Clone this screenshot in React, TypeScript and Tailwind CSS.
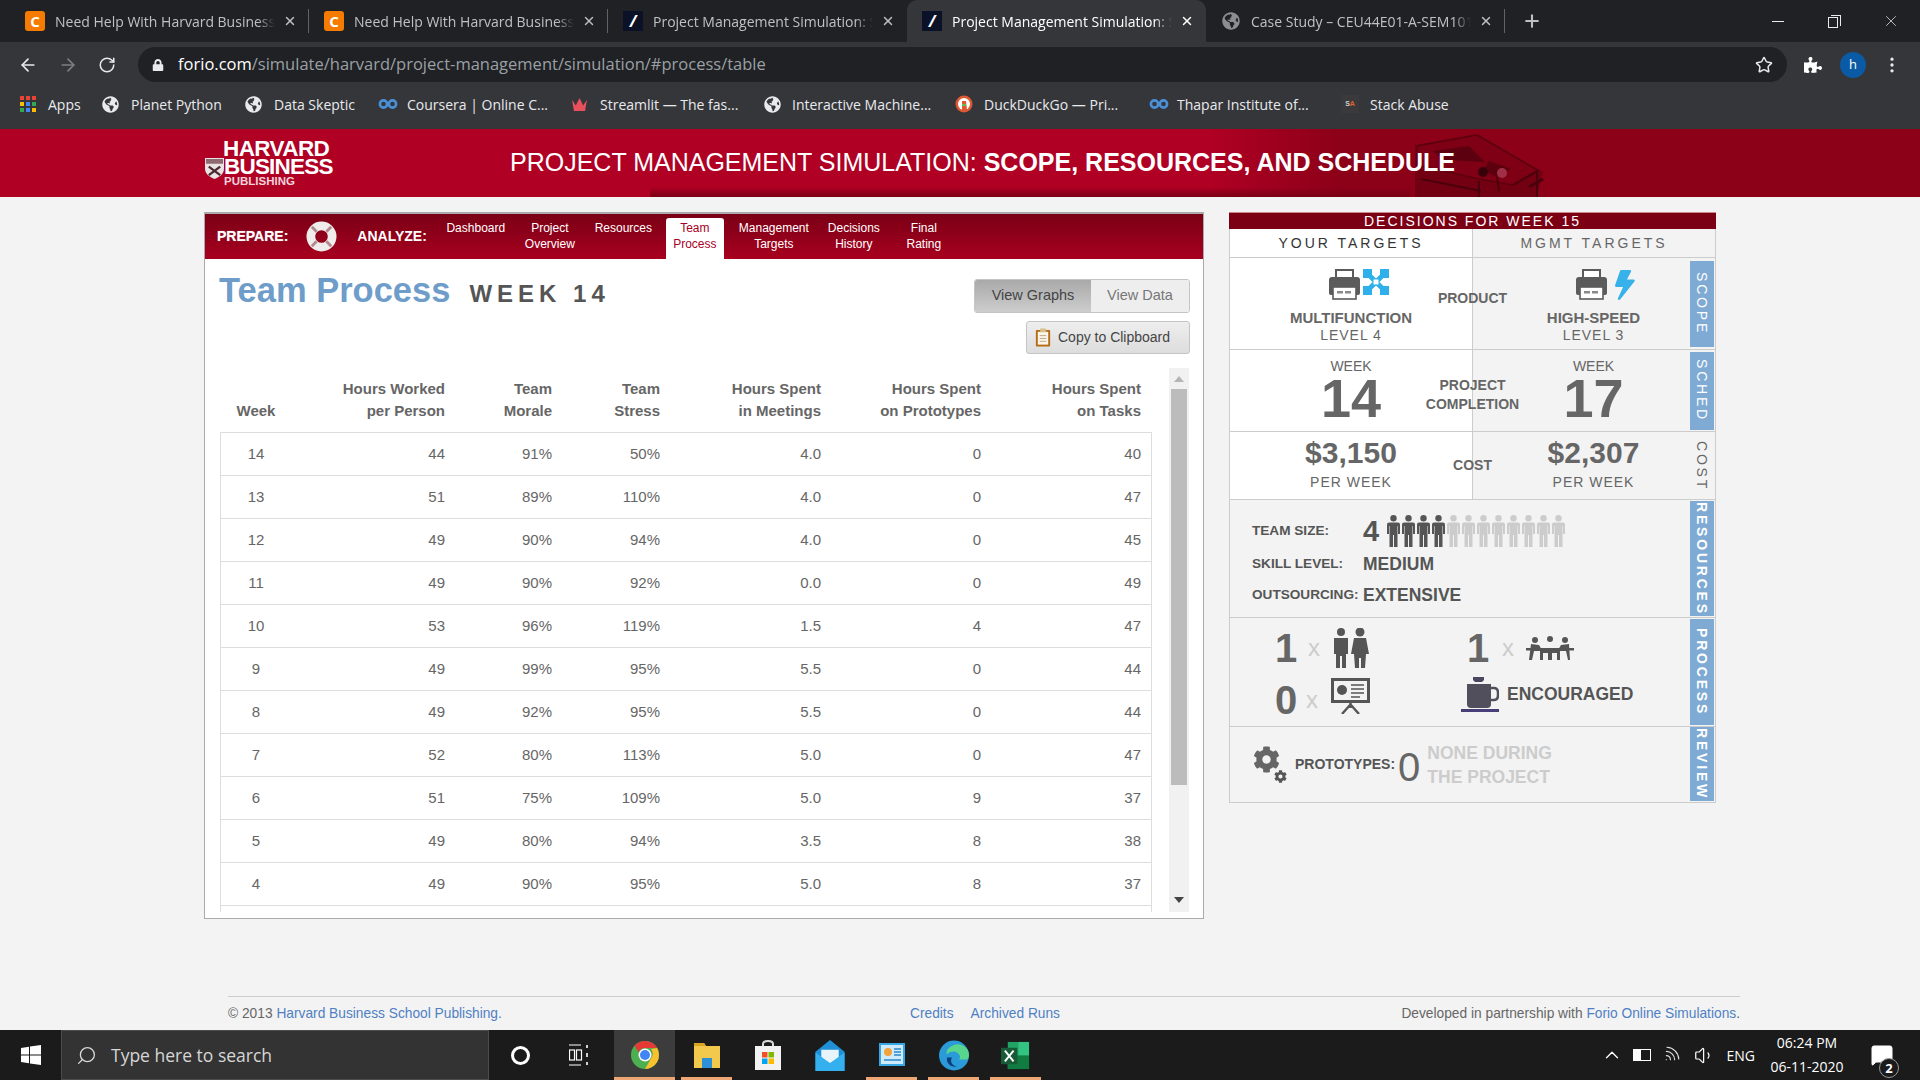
import {
  ArrowLeft,
  ArrowRight,
  ChevronUp,
  MessageSquare,
  MoreVertical,
  Plus,
  RotateCw,
  Search,
  Star,
  Volume1,
  Wifi,
  X,
} from "lucide-react";
import {
  FaBolt,
  FaCog,
  FaGlobeAmericas,
  FaLock,
  FaPuzzlePiece,
} from "react-icons/fa";

const tabs = [
  { title: "Need Help With Harvard Business", icon: "c", sep: true },
  { title: "Need Help With Harvard Business", icon: "c", sep: true },
  { title: "Project Management Simulation: Scope", icon: "slash", sep: false },
  { title: "Project Management Simulation: Scope", icon: "slash", active: true, sep: false },
  { title: "Case Study – CEU44E01-A-SEM101", icon: "globe", sep: true },
];

const rows = [
  ["14", "44", "91%", "50%", "4.0", "0", "40"],
  ["13", "51", "89%", "110%", "4.0", "0", "47"],
  ["12", "49", "90%", "94%", "4.0", "0", "45"],
  ["11", "49", "90%", "92%", "0.0", "0", "49"],
  ["10", "53", "96%", "119%", "1.5", "4", "47"],
  ["9", "49", "99%", "95%", "5.5", "0", "44"],
  ["8", "49", "92%", "95%", "5.5", "0", "44"],
  ["7", "52", "80%", "113%", "5.0", "0", "47"],
  ["6", "51", "75%", "109%", "5.0", "9", "37"],
  ["5", "49", "80%", "94%", "3.5", "8", "38"],
  ["4", "49", "90%", "95%", "5.0", "8", "37"],
];

const tableCols = "grid grid-cols-[72px_153px_107px_108px_161px_160px_160px]";

function TabIcon({ kind }: { kind: string }) {
  if (kind === "c") {
    return (
      <span className="flex h-[20px] w-[20px] items-center justify-center rounded-[3px] bg-[#f57c00] text-[15px] font-bold text-white">
        C
      </span>
    );
  }
  if (kind === "slash") {
    return (
      <span className="flex h-[20px] w-[20px] items-center justify-center bg-[#0b1228] text-[16px] font-bold italic text-white">
        /
      </span>
    );
  }
  return <FaGlobeAmericas className="h-[18px] w-[18px] text-[#8a8d91]" />;
}

function BrowserTabs() {
  return (
    <div className="flex h-[42px] items-stretch bg-[#202124] pl-[10px] font-['Open_Sans',sans-serif] text-[14px]">
      {tabs.map((t, i) => (
        <div
          key={i}
          className={
            t.active
              ? "flex w-[299px] items-center rounded-t-[10px] bg-[#35363a] pl-[15px] text-white"
              : "flex w-[299px] items-center pl-[15px] text-[#bdc1c6]"
          }
        >
          <span className="flex w-[20px] shrink-0 items-center justify-center">
            <TabIcon kind={t.icon} />
          </span>
          <span className="ml-[10px] flex-1 overflow-hidden whitespace-nowrap [mask-image:linear-gradient(to_right,black_92%,transparent)]">
            {t.title}
          </span>
          <X className="ml-[8px] h-[14px] w-[14px] shrink-0" strokeWidth={2.5} />
          <span className={t.sep ? "ml-[11px] h-[24px] w-px bg-[#5f6368]" : "ml-[11px] h-[24px] w-px"} />
        </div>
      ))}
      <div className="ml-[17px] flex items-center text-[#bdc1c6]">
        <Plus className="h-[20px] w-[20px]" strokeWidth={2.5} />
      </div>
      <div className="ml-auto flex items-center pr-[20px] text-[#e8eaed]">
        <div className="h-px w-[12px] bg-[#e8eaed]" />
        <div className="relative ml-[44px] h-[13px] w-[13px]">
          <div className="absolute bottom-0 left-0 h-[11px] w-[10px] border border-[#e8eaed]" />
          <div className="absolute right-0 top-0 h-[11px] w-[10px] border-r border-t border-[#e8eaed]" />
        </div>
        <X className="ml-[41px] h-[18px] w-[18px]" strokeWidth={1} />
      </div>
    </div>
  );
}

function AddressBar() {
  return (
    <div className="flex h-[43px] items-start bg-[#35363a] pl-[18px] pr-[10px] pt-[5px]">
      <div className="flex h-[35px] items-center">
        <ArrowLeft className="h-[20px] w-[20px] text-[#e8eaed]" />
        <ArrowRight className="ml-[20px] h-[20px] w-[20px] text-[#7c7f84]" />
        <RotateCw className="ml-[20px] h-[18px] w-[18px] text-[#e8eaed]" />
      </div>
      <div className="ml-[22px] flex h-[35px] w-[1649px] items-center rounded-full bg-[#202124] pl-[14px] pr-[14px]">
        <FaLock className="h-[12px] w-[12px] text-[#e8eaed]" />
        <span className="ml-[14px] font-['Open_Sans',sans-serif] text-[16.5px] text-[#9aa0a6]">
          <span className="text-white">forio.com</span>/simulate/harvard/project-management/simulation/#process/table
        </span>
        <Star className="ml-auto h-[18px] w-[18px] text-[#e8eaed]" />
      </div>
      <div className="flex h-[35px] items-center">
        <FaPuzzlePiece className="ml-[17px] h-[18px] w-[18px] text-white" />
        <span className="ml-[18px] flex h-[26px] w-[26px] items-center justify-center rounded-full bg-[#0b5aa5] font-['Open_Sans',sans-serif] text-[13px] text-white">
          h
        </span>
        <MoreVertical className="ml-[16px] h-[20px] w-[20px] text-[#e8eaed]" />
      </div>
    </div>
  );
}

function AppsIcon() {
  const colors = ["#ea4335", "#ea4335", "#ea4335", "#fbbc05", "#4285f4", "#34a853", "#34a853", "#4285f4", "#fbbc05"];
  return (
    <span className="grid h-[16px] w-[16px] grid-cols-3 gap-[2px]">
      {colors.map((c, i) => (
        <svg key={i} viewBox="0 0 4 4" className="h-[4px] w-[4px]">
          <rect width="4" height="4" fill={c} />
        </svg>
      ))}
    </span>
  );
}

function BookmarkIcon({ kind }: { kind: string }) {
  if (kind === "apps") return <AppsIcon />;
  if (kind === "globe") return <FaGlobeAmericas className="h-[17px] w-[17px] text-[#e8eaed]" />;
  if (kind === "coursera") {
    return (
      <svg viewBox="0 0 20 10" className="h-[10px] w-[20px]" fill="none" stroke="#4a90d9" strokeWidth="2.6">
        <circle cx="5.5" cy="5" r="3.6" />
        <circle cx="14.5" cy="5" r="3.6" />
      </svg>
    );
  }
  if (kind === "crown") {
    return (
      <svg viewBox="0 0 18 14" className="h-[13px] w-[17px]">
        <path d="M1 2l4 6 4-8 4 8 4-6-2 12H3z" fill="#e8505b" />
      </svg>
    );
  }
  if (kind === "duck") {
    return (
      <svg viewBox="0 0 18 18" className="h-[18px] w-[18px]">
        <circle cx="9" cy="9" r="8.5" fill="#de5833" />
        <circle cx="9" cy="9" r="6" fill="#fff" />
        <path d="M7 6h4l1 9H7z" fill="#de5833" />
        <path d="M7 9h4v2H7z" fill="#65bc46" />
      </svg>
    );
  }
  return (
    <span className="flex h-[18px] w-[18px] items-center justify-center bg-[#3a3a3c] font-['Liberation_Sans',sans-serif] text-[7px] font-bold">
      <span className="text-[#cfcfcf]">S</span>
      <span className="text-[#e8622a]">A</span>
    </span>
  );
}

const bookmarks = [
  { label: "Apps", icon: "apps", cls: "w-[82px]", gap: "ml-[12px]" },
  { label: "Planet Python", icon: "globe", cls: "w-[143px]", gap: "ml-[12px]" },
  { label: "Data Skeptic", icon: "globe", cls: "w-[133px]", gap: "ml-[12px]" },
  { label: "Coursera | Online C...", icon: "coursera", cls: "w-[193px]", gap: "ml-[9px]" },
  { label: "Streamlit — The fas...", icon: "crown", cls: "w-[193px]", gap: "ml-[12px]" },
  { label: "Interactive Machine...", icon: "globe", cls: "w-[191px]", gap: "ml-[11px]" },
  { label: "DuckDuckGo — Pri...", icon: "duck", cls: "w-[194px]", gap: "ml-[11px]" },
  { label: "Thapar Institute of...", icon: "coursera", cls: "w-[192px]", gap: "ml-[8px]" },
  { label: "Stack Abuse", icon: "sa", cls: "w-[120px]", gap: "ml-[11px]" },
];

function BookmarksBar() {
  return (
    <div className="flex h-[44px] items-center bg-[#35363a] pb-[6px] pl-[20px] font-['Open_Sans',sans-serif] text-[14px] text-[#e8eaed]">
      {bookmarks.map((b) => (
        <div key={b.label} className={"flex shrink-0 items-center whitespace-nowrap " + b.cls}>
          <BookmarkIcon kind={b.icon} />
          <span className={b.gap}>{b.label}</span>
        </div>
      ))}
    </div>
  );
}

function Shield() {
  return (
    <svg viewBox="0 0 20 24" className="mb-[7px] h-[23px] w-[19px] shrink-0 self-end">
      <path d="M0 1h20v11c0 6-5 9-10 11C5 21 0 18 0 12z" fill="#e9e3e3" />
      <path d="M1 2h18v5H1z" fill="#8f6a70" />
      <path d="M4 10l12 9M16 10L4 19" stroke="#4a2a30" strokeWidth="2.4" />
    </svg>
  );
}

function HeaderPrinter() {
  return (
    <svg viewBox="0 0 150 68" className="absolute left-[1397px] top-0 h-[68px] w-[150px]" fill="none">
      <path d="M18 16L80 5l66 38-6 25H18z" fill="#730012" />
      <path d="M20 17l60-11 62 36-26 14-34-6-62-14z" fill="#7f0015" stroke="#5c000f" strokeWidth="1.5" />
      <path d="M36 22l36-5 16 16-40-2zM92 32l22 8-14 8-14-6z" fill="#5c000f" />
      <circle cx="86" cy="43" r="5" fill="#3a0009" />
      <circle cx="105" cy="44" r="5" fill="#a03048" />
      <path d="M24 50l60 12M82 52v16M116 56l24-14v26M100 48l2 14" stroke="#4a000c" strokeWidth="2" />
      <path d="M146 50l-14 8" stroke="#4a000c" strokeWidth="3" />
    </svg>
  );
}

function SiteHeader() {
  return (
    <header className="relative flex h-[68px] items-center overflow-hidden bg-[linear-gradient(to_right,#b00024_0,#b00024_1210px,#8c0018_1340px,#8c0018_100%)] font-['Liberation_Sans',sans-serif] text-white">
      <div className="absolute bottom-0 left-[650px] h-[10px] w-[760px] bg-gradient-to-b from-transparent to-[#7a0014]" />
      <HeaderPrinter />
      <div className="relative ml-[205px] flex h-[48px] w-[135px] leading-none">
        <Shield />
        <div className="flex flex-col">
          <span className="-ml-[1px] text-[22.5px] font-bold leading-[19px] tracking-[-0.6px]">HARVARD</span>
          <span className="text-[22.5px] font-bold leading-[18px] tracking-[-0.8px]">BUSINESS</span>
          <span className="text-[11.5px] font-bold leading-[11px] text-[#f3d3da]">PUBLISHING</span>
        </div>
      </div>
      <h1 className="relative mb-[2px] ml-[170px] whitespace-nowrap text-[25px] leading-none">
        PROJECT MANAGEMENT SIMULATION: <b>SCOPE, RESOURCES, AND SCHEDULE</b>
      </h1>
    </header>
  );
}

function LifeRing() {
  return (
    <svg viewBox="0 0 32 32" className="h-[31px] w-[31px]">
      <circle cx="16" cy="16" r="11" fill="none" stroke="#f1ecec" strokeWidth="9" />
      <path d="M6 6l5 5M26 6l-5 5M6 26l5-5M26 26l-5-5" stroke="#b08a8f" strokeWidth="3" />
    </svg>
  );
}

const navItems = [
  { lines: ["Dashboard"], cls: "w-[74px]" },
  { lines: ["Project", "Overview"], cls: "w-[74px]" },
  { lines: ["Resources"], cls: "mr-[6px] w-[73px]" },
  { lines: ["Team", "Process"], cls: "w-[58px]", active: true },
  { lines: ["Management", "Targets"], cls: "w-[100px]" },
  { lines: ["Decisions", "History"], cls: "w-[60px]" },
  { lines: ["Final", "Rating"], cls: "w-[80px]" },
];

function SimNav() {
  return (
    <div className="flex h-[45px] items-stretch bg-gradient-to-b from-[#7a0015] to-[#a8001f] pl-[12px] text-white">
      <b className="self-center text-[14px] [text-shadow:0_0_1px_#fff8]">PREPARE:</b>
      <span className="ml-[18px] self-center">
        <LifeRing />
      </span>
      <b className="ml-[20px] self-center text-[14px]">ANALYZE:</b>
      <nav className="ml-[12px] flex items-stretch text-[12px] leading-[16px]">
        {navItems.map((n) => (
          <div
            key={n.lines[0]}
            className={
              n.cls +
              (n.active
                ? " mt-[4px] rounded-t-[3px] bg-white pt-[2px] text-center text-[#a8001f]"
                : " pt-[6px] text-center")
            }
          >
            {n.lines.map((l) => (
              <div key={l}>{l}</div>
            ))}
          </div>
        ))}
      </nav>
    </div>
  );
}

function ClipboardIcon() {
  return (
    <svg viewBox="0 0 16 20" className="h-[19px] w-[16px]">
      <rect x="0.5" y="2" width="15" height="17.5" rx="1" fill="#b56a14" />
      <rect x="2.5" y="4" width="11" height="13.5" fill="#fbf6e9" />
      <rect x="5" y="0.5" width="6" height="4" fill="#d9c28a" />
      <path d="M4.5 8h7M4.5 11h7M4.5 14h7" stroke="#b9a888" strokeWidth="1" />
    </svg>
  );
}

function DataTable() {
  return (
    <div className="mt-[14px] flex h-[544px] items-stretch gap-[17px]">
      <div className="flex w-[932px] flex-col">
        <div className={tableCols + " h-[64px] items-end pb-[10px] pr-[11px] text-right text-[15px] font-bold leading-[22px] text-[#666]"}>
          <div className="text-center">Week</div>
          <div>Hours Worked<br />per Person</div>
          <div>Team<br />Morale</div>
          <div>Team<br />Stress</div>
          <div>Hours Spent<br />in Meetings</div>
          <div>Hours Spent<br />on Prototypes</div>
          <div>Hours Spent<br />on Tasks</div>
        </div>
        <div className="flex-1 overflow-hidden border-x border-t border-[#ddd] bg-white">
          {rows.map((r) => (
            <div key={r[0]} className={tableCols + " -ml-px h-[43px] items-center border-b border-[#ddd] pr-[10px] text-right text-[15px] text-[#666]"}>
              {r.map((v, i) => (
                <div key={i} className={i === 0 ? "text-center" : ""}>
                  {v}
                </div>
              ))}
            </div>
          ))}
        </div>
      </div>
      <div className="flex w-[21px] flex-col items-center bg-[#f1f1f1] px-[2px]">
        <svg viewBox="0 0 10 6" className="mt-[8px] h-[6px] w-[10px]">
          <path d="M5 0l5 6H0z" fill="#b5b5b5" />
        </svg>
        <div className="mt-[7px] h-[396px] w-full bg-[#bcbcbc]" />
        <svg viewBox="0 0 10 6" className="mt-[112px] h-[6px] w-[10px]">
          <path d="M5 6L0 0h10z" fill="#444" />
        </svg>
      </div>
    </div>
  );
}

function MainPanel() {
  return (
    <section className="flex h-[707px] w-[1000px] shrink-0 flex-col border border-t-2 border-[#aaa] bg-white font-['Liberation_Sans',sans-serif]">
      <SimNav />
      <div className="flex-1 pl-[15px] pr-[14px]">
        <div className="flex justify-between pt-[20px]">
          <div className="-ml-px -mt-[12px] flex items-baseline">
            <h2 className="text-[34.5px] font-bold leading-[46px] text-[#6f9dc9]">Team Process</h2>
            <span className="ml-[19px] text-[24px] font-bold tracking-[5px] text-[#555]">WEEK 14</span>
          </div>
          <div className="-mr-px flex flex-col items-end gap-[8px] text-[14px]">
            <div className="flex h-[34px] overflow-hidden rounded-[3px] border border-[#c4c4c4] text-[14.5px]">
              <div className="flex w-[116px] items-center justify-center bg-gradient-to-b from-[#a9a9a9] to-[#cdcdcd] text-[#444]">
                View Graphs
              </div>
              <div className="flex w-[98px] items-center justify-center bg-[#eee] text-[#777]">View Data</div>
            </div>
            <div className="flex h-[33px] w-[164px] items-center gap-[7px] rounded-[3px] border border-[#c4c4c4] bg-gradient-to-b from-[#eee] to-[#ddd] pl-[8px] text-[#444]">
              <ClipboardIcon />
              Copy to Clipboard
            </div>
          </div>
        </div>
        <DataTable />
      </div>
    </section>
  );
}

function SideTab({ label, plain, cls }: { label: string; plain?: boolean; cls: string }) {
  return (
    <div
      className={
        "absolute right-[1px] flex w-[24px] items-center justify-center overflow-hidden whitespace-nowrap text-[14px] leading-none tracking-[2.8px] [writing-mode:vertical-rl] " +
        (plain ? "text-[#666] " : "bg-[#7eaad4] text-white ") +
        cls
      }
    >
      {label}
    </div>
  );
}

function Printer() {
  return (
    <svg viewBox="0 0 31 31" className="h-[31px] w-[31px]">
      <path d="M7 1h17v11H7z" fill="#fff" stroke="#5b5b5b" strokeWidth="2" />
      <path d="M3 8h25q3 0 3 3v13q0 2-2 2H2q-2 0-2-2V11q0-3 3-3z" fill="#5b5b5b" />
      <rect x="4" y="18" width="23" height="12" fill="#fff" stroke="#5b5b5b" strokeWidth="1.6" />
      <rect x="8" y="22" width="6" height="2.5" fill="#8a8a8a" />
      <rect x="16" y="22" width="6" height="2.5" fill="#8a8a8a" />
    </svg>
  );
}

function ExpandCross() {
  return (
    <svg viewBox="0 0 26 26" className="h-[26px] w-[26px] self-start">
      <g fill="#2fb0ea">
        <rect x="0" y="0" width="9" height="9" />
        <rect x="17" y="0" width="9" height="9" />
        <rect x="0" y="17" width="9" height="9" />
        <rect x="17" y="17" width="9" height="9" />
      </g>
      <path d="M6 6l14 14M20 6L6 20" stroke="#2fb0ea" strokeWidth="5" />
      <rect x="10.5" y="10.5" width="5" height="5" fill="#fff" />
    </svg>
  );
}

function CompareRow({
  height,
  left,
  right,
  label,
  labelCls,
  children,
}: {
  height: string;
  left: React.ReactNode;
  right: React.ReactNode;
  label: React.ReactNode;
  labelCls?: string;
  children?: React.ReactNode;
}) {
  return (
    <div className={"relative grid grid-cols-[243px_1fr] border-b border-[#ccc] text-[#666] " + height}>
      <div className="flex flex-col items-center border-r border-[#ccc] bg-white">{left}</div>
      <div className="flex flex-col items-center pr-[1px]">{right}</div>
      <div
        className={
          "absolute inset-0 flex flex-col items-center justify-center text-center text-[14px] font-bold leading-[19.5px] text-[#666] " +
          (labelCls ?? "")
        }
      >
        {label}
      </div>
      {children}
    </div>
  );
}

function ProductCell({ icon, name, level, shift }: { icon: React.ReactNode; name: string; level: string; shift: string }) {
  return (
    <>
      <div className={"mt-[11px] flex h-[31px] items-center gap-[3px] " + shift}>{icon}</div>
      <div className="mt-[9px] text-[15px] font-bold leading-[18px]">{name}</div>
      <div className="text-[14px] leading-[17px] tracking-[1px]">{level}</div>
    </>
  );
}

function WeekCell({ week }: { week: string }) {
  return (
    <>
      <div className="mt-[8px] text-[14px] leading-[16px]">WEEK</div>
      <div className="-mt-[1px] text-[54px] font-bold leading-[50px]">{week}</div>
    </>
  );
}

function CostCell({ cost }: { cost: string }) {
  return (
    <>
      <div className="mt-[2px] text-[30px] font-bold leading-[38px]">{cost}</div>
      <div className="mt-[1px] text-[14px] leading-[18px] tracking-[1px]">PER WEEK</div>
    </>
  );
}

function Person({ on }: { on: boolean }) {
  return (
    <svg viewBox="0 0 13 32" className={on ? "mr-[2px] h-[32px] w-[13px] fill-[#555]" : "mr-[2px] h-[32px] w-[13px] fill-[#ccc]"}>
      <circle cx="6.5" cy="3.2" r="3.2" />
      <path d="M2 7.5h9q2 0 2 2V19h-2v-8h-.5v21H7v-12H6v12H2.500V11H2v8H0V9.500q0-2 2-2z" />
    </svg>
  );
}

function TeamSize() {
  return (
    <div className="flex">
      {Array.from({ length: 12 }).map((_, i) => (
        <Person key={i} on={i < 4} />
      ))}
    </div>
  );
}

function BusinessPair() {
  return (
    <svg viewBox="0 0 36 40" className="h-[40px] w-[36px]" fill="#555">
      <circle cx="8" cy="4" r="4" />
      <path d="M1 10h14v16h-2v14H9V28H7v12H3V26H1z" />
      <circle cx="27" cy="4" r="4.500" />
      <path d="M21 10h12l3 16h-3l-1 14h-4V30h-2v10h-4l-1-14h-3z" />
    </svg>
  );
}

function MeetingIcon() {
  return (
    <svg viewBox="0 0 48 24" className="h-[24px] w-[48px]" fill="#555">
      <circle cx="9" cy="4" r="3" />
      <circle cx="24" cy="3" r="3" />
      <circle cx="39" cy="4" r="3" />
      <path d="M5 8l8 1 3 5h16l3-5 8-1 1 16h-2l-2-9h-6v9h-3v-7h-5v7h-4v-7h-5v7h-3V15H8l-2 9H3z" />
      <rect x="0" y="12" width="48" height="2.500" />
    </svg>
  );
}

function Presentation() {
  return (
    <svg viewBox="0 0 39 36" className="h-[36px] w-[39px]">
      <rect x="0" y="0" width="39" height="25" fill="#555" />
      <rect x="3" y="3" width="33" height="19" fill="#f3f3f3" />
      <circle cx="11" cy="12" r="5" fill="#555" />
      <path d="M20 7h13M20 11h13M20 15h13M20 19h9" stroke="#555" strokeWidth="1.6" />
      <path d="M19.500 25v5M19 27l-8 9M20 27l8 9" stroke="#555" strokeWidth="2.4" />
    </svg>
  );
}

function Mug() {
  return (
    <svg viewBox="0 0 38 35" className="h-[35px] w-[38px]">
      <path d="M12 0h11v3l-2 2h-7l-2-2z" fill="#4d4660" />
      <path d="M6 7h24v20q0 4-4 4H10q-4 0-4-4z" fill="#524f5c" />
      <path d="M30 11h3q4 0 4 5v2q0 5-4 5h-3" fill="none" stroke="#524f5c" strokeWidth="2.5" />
      <rect x="0" y="32" width="38" height="3" fill="#483f78" />
    </svg>
  );
}

function Gears() {
  return (
    <div className="relative h-[37px] w-[34px]">
      <FaCog className="h-[27px] w-[27px] text-[#666]" />
      <FaCog className="absolute bottom-0 right-0 h-[13px] w-[13px] text-[#555]" />
    </div>
  );
}

function DecisionsPanel() {
  return (
    <aside className="h-[592px] w-[487px] shrink-0 font-['Liberation_Sans',sans-serif]">
      <div className="flex h-[17px] items-center justify-center border-t border-[#c88] bg-[#7c0014] text-[14px] leading-none tracking-[2px] text-white">
        DECISIONS FOR WEEK 15
      </div>
      <div className="border-x border-[#ccc]">
        <div className="grid h-[29px] grid-cols-[243px_1fr] items-center border-b border-[#ccc] text-center text-[14px] tracking-[3px]">
          <div className="flex h-full items-center justify-center border-r border-[#ccc] bg-white text-[#333]">YOUR TARGETS</div>
          <div className="text-[#666]">MGMT TARGETS</div>
        </div>
        <CompareRow
          height="h-[92px]"
          label="PRODUCT"
          labelCls="pb-[10px]"
          left={
            <ProductCell
              name="MULTIFUNCTION"
              level="LEVEL 4"
              shift="ml-[16px]"
              icon={
                <>
                  <Printer />
                  <ExpandCross />
                </>
              }
            />
          }
          right={
            <ProductCell
              name="HIGH-SPEED"
              level="LEVEL 3"
              shift="ml-[24px]"
              icon={
                <>
                  <Printer />
                  <FaBolt className="ml-[4px] h-[30px] w-[21px] -skew-x-12 text-[#37b1ea]" />
                </>
              }
            />
          }
        >
          <SideTab label="SCOPE" cls="top-[3px] h-[86px]" />
        </CompareRow>
        <CompareRow
          height="h-[82px]"
          labelCls="pt-[9px]"
          label={
            <>
              <div>PROJECT</div>
              <div>COMPLETION</div>
            </>
          }
          left={<WeekCell week="14" />}
          right={<WeekCell week="17" />}
        >
          <SideTab label="SCHED" cls="top-[2px] h-[78px]" />
        </CompareRow>
        <CompareRow
          height="h-[68px]"
          label="COST"
          left={<CostCell cost="$3,150" />}
          right={<CostCell cost="$2,307" />}
        >
          <SideTab label="COST" plain cls="top-[8px] h-[52px]" />
        </CompareRow>

        <div className="relative flex h-[118px] flex-col border-b border-[#ccc] pl-[22px] pt-[14px] font-bold text-[#555]">
          <div className="flex h-[34px] items-center">
            <span className="w-[111px] text-[13.6px]">TEAM SIZE:</span>
            <span className="w-[24px] text-[29px] leading-none">4</span>
            <TeamSize />
          </div>
          <div className="flex h-[32px] items-center">
            <span className="w-[111px] text-[13.6px]">SKILL LEVEL:</span>
            <span className="text-[17.5px]">MEDIUM</span>
          </div>
          <div className="flex h-[30px] items-center">
            <span className="w-[111px] text-[13.6px]">OUTSOURCING:</span>
            <span className="text-[17.5px]">EXTENSIVE</span>
          </div>
          <SideTab label="RESOURCES" cls="top-[1px] h-[115px]" />
        </div>

        <div className="relative grid h-[109px] grid-cols-[192px_1fr] border-b border-[#ccc] pl-[45px] font-bold text-[#666]">
          <div className="flex flex-col">
            <div className="flex h-[53px] items-center pt-[7px]">
              <span className="w-[33px] text-[40px] leading-none">1</span>
              <span className="w-[25px] text-[24px] font-normal leading-none text-[#ccc]">x</span>
              <BusinessPair />
            </div>
            <div className="flex h-[50px] items-center pt-[8px]">
              <span className="w-[31px] text-[40px] leading-none">0</span>
              <span className="w-[25px] text-[24px] font-normal leading-none text-[#ccc]">x</span>
              <span className="-mt-[8px]">
                <Presentation />
              </span>
            </div>
          </div>
          <div className="flex flex-col">
            <div className="flex h-[53px] items-center pt-[6px]">
              <span className="w-[36px] text-[40px] leading-none">1</span>
              <span className="-ml-[1px] w-[24px] text-[24px] font-normal leading-none text-[#ccc]">x</span>
              <MeetingIcon />
            </div>
            <div className="-ml-[6px] flex h-[50px] items-center pb-[3px]">
              <Mug />
              <span className="ml-[8px] text-[17.5px] text-[#555]">ENCOURAGED</span>
            </div>
          </div>
          <SideTab label="PROCESS" cls="top-[1px] h-[106px]" />
        </div>

        <div className="relative flex h-[76px] items-center border-b border-[#ccc] pl-[23px] font-bold">
          <Gears />
          <span className="ml-[8px] text-[14px] text-[#555]">PROTOTYPES:</span>
          <span className="ml-[3px] mt-[4px] text-[40px] font-normal leading-none text-[#666]">0</span>
          <span className="ml-[7px] text-[17.5px] leading-[24px] text-[#ccc]">
            NONE DURING
            <br />
            THE PROJECT
          </span>
          <SideTab label="REVIEW" cls="top-0 h-[74px]" />
        </div>
      </div>
    </aside>
  );
}

function PageFooter() {
  return (
    <footer className="ml-[228px] mr-[180px] mt-auto flex h-[34px] items-center border-t border-[#ccc] pt-[2px] font-['Liberation_Sans',sans-serif] text-[13.75px] text-[#666]">
      <div className="w-[682px]">
        © 2013 <span className="text-[#4f7fc4]">Harvard Business School Publishing.</span>
      </div>
      <div className="flex gap-[17px] text-[#4f7fc4]">
        <span>Credits</span>
        <span>Archived Runs</span>
      </div>
      <div className="ml-auto">
        Developed in partnership with <span className="text-[#4f7fc4]">Forio Online Simulations</span>.
      </div>
    </footer>
  );
}

function WindowsLogo() {
  return (
    <svg viewBox="0 0 20 20" className="h-[20px] w-[20px]" fill="#fff">
      <path d="M0 3l8-1.200V9.500H0zM9 1.600L20 0v9.500H9zM0 10.500h8v7.700L0 17zM9 10.500h11V20L9 18.400z" />
    </svg>
  );
}

function TaskViewIcon() {
  return (
    <svg viewBox="0 0 20 22" className="h-[22px] w-[20px]" fill="none" stroke="#fff" strokeWidth="1.2">
      <path d="M0 1h12M0 21h12" />
      <rect x="0.500" y="6" width="5" height="10" />
      <rect x="7.500" y="6" width="5" height="10" />
      <path d="M18 1v3M18 9v4M18 18v3" strokeWidth="1.6" />
    </svg>
  );
}

function ChromeLogo() {
  return (
    <svg viewBox="0 0 28 28" className="h-[28px] w-[28px]">
      <circle cx="14" cy="14" r="14" fill="#4caf50" />
      <path d="M14 0a14 14 0 0 1 12.100 7H14a7 7 0 0 0-6.400 4.200L3.500 4.800A14 14 0 0 1 14 0z" fill="#e53935" />
      <path d="M26.100 7A14 14 0 0 1 14 28l6-10.500A7 7 0 0 0 20 8z" fill="#fbc02d" />
      <circle cx="14" cy="14" r="6.500" fill="#fff" />
      <circle cx="14" cy="14" r="5" fill="#4285f4" />
    </svg>
  );
}

const taskIcons = [
  {
    cls: "w-[61px] bg-[#3c3c3c]",
    bar: "w-full",
    icon: <ChromeLogo />,
  },
  {
    cls: "ml-[6px] w-[51px]",
    bar: "w-full",
    icon: (
      <svg viewBox="0 0 28 28" className="h-[28px] w-[28px]">
        <path d="M1 2h10l2 3h14v22H1z" fill="#f2c94c" />
        <path d="M1 2h10l2 3H1z" fill="#d9a520" />
        <rect x="9" y="17" width="10" height="10" fill="#2d8fd5" />
      </svg>
    ),
  },
  {
    cls: "ml-[10px] w-[51px]",
    bar: "",
    icon: (
      <svg viewBox="0 0 28 30" className="h-[30px] w-[28px]">
        <path d="M9 7V4q0-3 5-3t5 3v3" fill="none" stroke="#ddd" strokeWidth="2" />
        <rect x="1" y="6" width="26" height="24" fill="#f2f2f2" />
        <rect x="8" y="12" width="5.500" height="5.500" fill="#f25022" />
        <rect x="14.500" y="12" width="5.500" height="5.500" fill="#7fba00" />
        <rect x="8" y="18.500" width="5.500" height="5.500" fill="#00a4ef" />
        <rect x="14.500" y="18.500" width="5.500" height="5.500" fill="#ffb900" />
      </svg>
    ),
  },
  {
    cls: "ml-[11px] w-[51px]",
    bar: "",
    icon: (
      <svg viewBox="0 0 30 32" className="h-[31px] w-[30px]">
        <path d="M15 0l15 12v20H0V12z" fill="#1f8fd8" />
        <path d="M6 10h18v8l-9 6-9-6z" fill="#e8f4fb" />
        <path d="M0 13l15 11 15-11v19H0z" fill="#35b0ef" />
      </svg>
    ),
  },
  {
    cls: "ml-[11px] w-[51px]",
    bar: "w-full",
    icon: (
      <svg viewBox="0 0 26 26" className="h-[26px] w-[26px]">
        <rect x="0" y="1" width="26" height="23" fill="#37a7e6" />
        <rect x="2" y="3" width="22" height="19" fill="#cfeafa" />
        <circle cx="9" cy="10" r="4" fill="#f2a33a" />
        <path d="M15 7h7M15 10h7M15 13h7M5 18h17" stroke="#2c88c9" strokeWidth="1.400" />
      </svg>
    ),
  },
  {
    cls: "ml-[11px] w-[51px]",
    bar: "w-full",
    icon: (
      <svg viewBox="0 0 30 30" className="h-[31px] w-[30px]">
        <circle cx="15" cy="15" r="15" fill="#2a9ad8" />
        <path d="M30 15c0-8-7-12-13-11S6 10 8 14c2-3 7-4 10-2s4 5 2 7h8q2-2 2-4z" fill="#58d68d" />
        <path d="M8 17c-1 6 4 10 10 9-6-1-7-6-5-9z" fill="#0d3f78" />
      </svg>
    ),
  },
  {
    cls: "ml-[11px] w-[51px]",
    bar: "w-full",
    icon: (
      <svg viewBox="0 0 30 30" className="h-[29px] w-[29px]">
        <rect x="7" y="1" width="22" height="28" fill="#21a366" />
        <rect x="18" y="1" width="11" height="14" fill="#33c481" />
        <rect x="7" y="15" width="22" height="14" fill="#107c41" />
        <rect x="0" y="7" width="17" height="17" fill="#185c37" />
        <path d="M4 10l9 11M13 10L4 21" stroke="#fff" strokeWidth="2" />
      </svg>
    ),
  },
];

function Taskbar() {
  return (
    <div className="flex h-[50px] items-stretch bg-[#1b1b1b] font-['Open_Sans',sans-serif] text-white">
      <div className="flex w-[61px] items-center justify-center">
        <WindowsLogo />
      </div>
      <div className="flex w-[428px] items-center border border-[#4c4c4c] bg-[#333] pl-[14px] text-[17.5px] text-[#d6d6d6]">
        <Search className="h-[21px] w-[21px] -scale-x-100" strokeWidth={1.5} />
        <span className="ml-[14px]">Type here to search</span>
      </div>
      <div className="flex w-[62px] items-center justify-center">
        <span className="h-[19px] w-[19px] rounded-full border-[3px] border-white" />
      </div>
      <div className="flex w-[56px] items-center justify-center">
        <TaskViewIcon />
      </div>
      <div className="ml-[7px] flex items-stretch">
        {taskIcons.map((t, i) => (
          <div key={i} className={"relative flex items-center justify-center " + t.cls}>
            {t.icon}
            <span className={"absolute bottom-0 left-0 h-[3px] bg-[#eea675] " + t.bar} />
          </div>
        ))}
      </div>
      <div className="ml-auto flex items-center">
        <ChevronUp className="h-[22px] w-[22px]" strokeWidth={1.4} />
        <div className="ml-[10px] flex h-[12px] w-[18px] items-center border border-white">
          <span className="h-full w-[7px] bg-white" />
        </div>
        <Wifi className="ml-[10px] h-[20px] w-[20px] rotate-45 text-[#ddd]" strokeWidth={1.4} />
        <Volume1 className="ml-[13px] h-[21px] w-[21px]" strokeWidth={1.4} />
        <span className="ml-[12px] text-[14px]">ENG</span>
        <div className="ml-[13px] w-[78px] text-center text-[14px] leading-[24px]">
          <div>06:24 PM</div>
          <div>06-11-2020</div>
        </div>
        <div className="relative ml-[24px] mr-[26px] flex">
          <MessageSquare className="h-[24px] w-[24px] fill-white" strokeWidth={1} />
          <span className="absolute -bottom-[11px] left-[9px] flex h-[20px] w-[20px] items-center justify-center rounded-full border border-[#999] bg-[#1b1b1b] text-[13px] font-bold leading-none">
            2
          </span>
        </div>
      </div>
    </div>
  );
}

export default function App() {
  return (
    <div className="flex h-[1080px] w-[1920px] flex-col overflow-hidden bg-[#f3f3f3]">
      <BrowserTabs />
      <AddressBar />
      <BookmarksBar />
      <SiteHeader />
      <main className="flex items-start gap-[25px] pl-[204px] pt-[15px]">
        <MainPanel />
        <DecisionsPanel />
      </main>
      <PageFooter />
      <Taskbar />
    </div>
  );
}
